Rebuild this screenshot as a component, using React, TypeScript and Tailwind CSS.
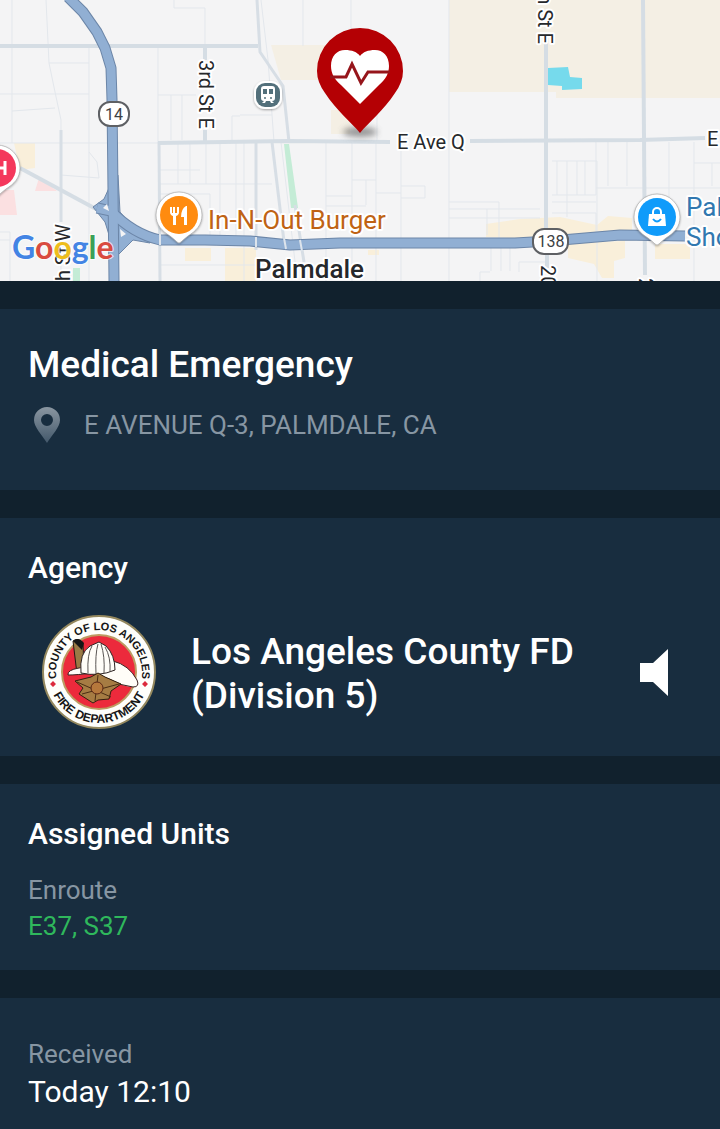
import type { ReactNode } from 'react';

const FREEWAY_14 = 'M68 -3 L83 12 L97 32 L105 48 L111 68 L112 100 L114 281';
const ROUTE_138 =
  'M97 208 L111 211 Q133 234 160 240 L205 240 L250 241 L290 245 L340 243 L450 243 L515 243 L550 241 L620 235 L685 236';

const ARTERIALS = [
  'M0 46 H258',
  'M158 143 L290 141 L390 142 M470 141 L640 140 L705 138',
  'M546 42 L546 228 M547 254 V268',
  'M643 0 L645 275',
  'M205 47 V60 M205 130 V142',
  'M20 168 L96 209',
];

const SIDE_ROADS = [
  'M159 142 L160 281',
  'M257 0 L260 52 L283 86 L289 142',
  'M272 142 L285 250 M256 142 V250',
  'M61 130 V222',
  'M295 205 L304 262',
];

const STREETS = [
  'M12 0 V143 M46 0 L49 63 L55 92 L61 120 V143 M49 63 H89 M0 94 H89 M12 111 L55 108 M89 48 V281',
  'M0 143 H158 M158 48 V142 M158 95 H196 M171 95 V140 M182 95 V140 M232 142 V116 H240 M174 0 V8 H205 V46',
  'M61 143 V175 L99 178 M89 152 L97 162 L99 178 M0 232 H10 V281 M0 240 H10 M61 265 V281',
  'M178 142 V184 M206 142 V184 M220 142 V240 M236 142 V240 M160 184 H272 M160 194 H210 V240 M244 142 V281 M160 170 H200 M190 142 V184 M160 265 H256',
  'M303 0 V46 M351 0 V30 M261 0 L268 60 L274 142 L281 142 L296 270 M240 115 H272 M377 115 V142',
  'M326 142 V281 M352 142 V281 M376 142 V281 M401 142 V281 M449 0 V281 M326 196 H352 M326 206 H366 M352 180 H376 M366 180 V205 M376 193 H401 M401 186 H425 V198 H401',
  'M449 202 H499 V240 M449 209 H540 M449 218 H540 M487 209 V235 M480 281 V272 H490 M491 240 V271 M501 240 V271 M510 240 V271 M519 272 V262 H546',
  'M552 161 H597 V281 M596 142 V195 L552 195 M557 161 V195 M567 161 V217 M577 161 V195 M585 161 V195 M552 202 H596 M552 213 H596 V240 M596 188 H720 M627 142 V186 M669 142 V235 M694 142 V281 M694 163 H720 M712 163 V186 M608 142 V186',
];

const Stroke = ({ d, color, width }: { d: string; color: string; width: number }) => (
  <path d={d} fill="none" stroke={color} strokeWidth={width} strokeLinejoin="round" />
);

type PinProps = { x: number; y: number; color: string; children: ReactNode };

const PlacePin = ({ x, y, color, children }: PinProps) => (
  <g transform={`translate(${x} ${y})`}>
    <path
      d="M0 -23 A23 23 0 0 1 23 0 C23 10 17 16 9 21 Q5 24 2 27 Q0 29 -2 27 Q-5 24 -9 21 C-17 16 -23 10 -23 0 A23 23 0 0 1 0 -23Z"
      fill="#fff"
      stroke="#8d8d8d"
      strokeOpacity="0.5"
      strokeWidth="1"
      filter="url(#pin-shadow)"
    />
    <circle r="19" fill={color} />
    {children}
  </g>
);

const IncidentMap = () => (
  <svg
    className="block h-[281px] w-full bg-[#f4f4f5] font-[Roboto,sans-serif]"
    viewBox="0 0 720 281"
    preserveAspectRatio="xMidYMid slice"
    role="img"
    aria-label="Map of Palmdale"
  >
    <defs>
      <filter id="pin-shadow" x="-30%" y="-30%" width="160%" height="160%">
        <feDropShadow dx="0" dy="1" stdDeviation="1" floodOpacity="0.35" />
      </filter>
      <filter id="ground-shadow" x="-40%" y="-80%" width="180%" height="260%">
        <feGaussianBlur stdDeviation="3" />
      </filter>
    </defs>

    <g fill="#f4efe4">
      <path d="M449 0 H720 V98 H556 V92 H449Z" />
      <path d="M271 45 H340 V80 H281Z" />
      <path d="M331 110 H350 V134 H331Z" />
    </g>
    <g fill="#f9efda">
      <path d="M14 143 H35 V168 L20 170Z" />
      <path d="M185 248 H211 V261 H185Z M225 248 H256 V281 H225Z M368 250 H379 V255 H368Z" />
      <path d="M486 224 L520 219 L560 217 L597 225 L608 216 L632 218 V234 L560 240 L486 237Z" />
      <path d="M568 243 L625 241 V258 L614 261 V278 H602 L594 264 L568 258Z M655 244 H690 V259 H655Z" />
    </g>
    <path d="M0 190 L14 190 L17 215 H0Z M39 178 L57 191 H35Z" fill="#fbe0e1" />
    <path d="M284 144 H289 L298 208 H291Z M73 268 H80 V281 H73Z" fill="#c4ecd6" />
    <path d="M548 68 L568 67 L570 77 L582 78 V89 L562 90 V86 L548 85Z" fill="#76daec" />

    {STREETS.map((d) => <Stroke key={d} d={d} color="#e3e7ec" width={1} />)}
    {SIDE_ROADS.map((d) => <Stroke key={d} d={d} color="#d7dee5" width={3} />)}
    {ARTERIALS.map((d) => <Stroke key={d} d={d} color="#d5dde4" width={4} />)}

    <path
      d="M93 207 L104 199 L109 188 L110 175 L118 175 L120 212 Q133 229 148 234 L150 243 L133 240 L119 254 L110 238 L105 222Z"
      fill="#91afd3"
      stroke="#6c86a8"
      strokeWidth="1"
    />
    <Stroke d={ROUTE_138} color="#6c86a8" width={11} />
    <Stroke d={FREEWAY_14} color="#6c86a8" width={11} />
    <Stroke d={ROUTE_138} color="#91afd3" width={9} />
    <Stroke d={FREEWAY_14} color="#91afd3" width={9} />
    <path d="M103 208 L107 204 L109 211Z M120 229 L126 234 L121 237Z" fill="#f4f4f5" />
    <path d="M160 234 V245 M256 237 V247 M284 238 L286 249 M300 240 L302 251" stroke="#dde4ec" strokeWidth="2" />

    <g fill="#fff" stroke="#5e6064" strokeWidth="2">
      <rect x="99" y="102" width="30" height="24" rx="11" />
      <rect x="533" y="229" width="35" height="25" rx="11" />
    </g>
    <g fill="#3c4043" fontSize="16" textAnchor="middle">
      <text x="114" y="120">14</text>
      <text x="551" y="247">138</text>
    </g>

    <g className="[paint-order:stroke]" stroke="#fff" strokeWidth="4" strokeLinejoin="round">
      <g fill="#26282b" fontSize="20">
        <text x="397" y="149">E Ave Q</text>
        <text x="707" y="146">E</text>
        <text transform="translate(199 60) rotate(90)">3rd St E</text>
        <text transform="translate(538 44) rotate(90)" textAnchor="end">h St E</text>
        <text transform="translate(541 265) rotate(90)">20</text>
        <text transform="translate(639 278) rotate(90)">2</text>
        <text transform="translate(70 224) rotate(-90)" textAnchor="end">h St W</text>
      </g>
      <text x="255" y="278" fill="#26282b" fontSize="26" fontWeight="500">Palmdale</text>
      <text x="208" y="229" fill="#bf6314" fontSize="26">In-N-Out Burger</text>
      <g fill="#3178b0" fontSize="26">
        <text x="686" y="216">Pal</text>
        <text x="686" y="246">Sho</text>
      </g>
    </g>
    <text
      x="12"
      y="259"
      className="font-[Lato,sans-serif] [paint-order:stroke]"
      fontSize="32"
      fontWeight="700"
      stroke="#fff"
      strokeWidth="2"
      strokeOpacity="0.7"
    >
      <tspan fill="#4384e4">G</tspan>
      <tspan fill="#d94b40">o</tspan>
      <tspan fill="#eebd1b">o</tspan>
      <tspan fill="#4384e4">g</tspan>
      <tspan fill="#3ba057">l</tspan>
      <tspan fill="#d94b40">e</tspan>
    </text>

    <PlacePin x={-3} y={168} color="#f4385c">
      <path d="M-1 -7 V7 M8 -7 V7 M-1 0 H8" fill="none" stroke="#fff" strokeWidth="3" />
    </PlacePin>
    <PlacePin x={179} y={215} color="#ff8b0f">
      <path
        d="M-9 -8 V-3 Q-9 0 -6 1 V10 H-3 V1 Q0 0 0 -3 V-8 H-2 V-2 H-4 V-8 H-6 V-2 H-7 V-8Z M7 -9 Q2 -6 2 2 H5 V10 H8 V-9Z"
        fill="#fff"
      />
    </PlacePin>
    <PlacePin x={657} y={217} color="#109bfa">
      <path d="M-4 -2 V-5 A4 4 0 0 1 4 -5 V-2" fill="none" stroke="#fff" strokeWidth="2" />
      <path d="M-8 -3 H8 L9 9 H-9Z" fill="#fff" />
      <path d="M-4 2 Q0 7 4 2" fill="none" stroke="#109bfa" strokeWidth="2" />
    </PlacePin>

    <g transform="translate(268 95)">
      <rect x="-14" y="-14" width="28" height="28" rx="11" fill="#fff" filter="url(#pin-shadow)" />
      <rect x="-12" y="-12" width="24" height="24" rx="9" fill="#53707b" />
      <path d="M-4 -9 H4 Q7 -9 7 -6 V3 Q7 6 4 6 L6 8 H3 L2 6 H-2 L-3 8 H-6 L-4 6 Q-7 6 -7 3 V-6 Q-7 -9 -4 -9Z" fill="#fff" />
      <path d="M-5 -6 H-1 V-1 H-5Z M1 -6 H5 V-1 H1Z" fill="#53707b" />
      <circle cx="-3" cy="3" r="1" fill="#53707b" />
      <circle cx="3" cy="3" r="1" fill="#53707b" />
    </g>

    <ellipse cx="360" cy="132" rx="17" ry="5" fill="#555" opacity="0.6" filter="url(#ground-shadow)" />
    <path
      d="M360 133 C352 123 336 110 325 93 Q317 82 317 71 A43 43 0 0 1 403 71 Q403 82 395 93 C384 110 368 123 360 133Z"
      fill="#b40004"
    />
    <path
      d="M360 104 L341 85 C334 79 331 73 331 66 C331 56 337 50 345 50 C352 50 357 52 360 56 C363 52 368 50 375 50 C383 50 389 56 389 66 C389 73 386 79 379 85Z"
      fill="#fff"
    />
    <path d="M330 77 H346 L352 64 L361 83 L368 72 H390" fill="none" stroke="#96151b" strokeWidth="3" />
  </svg>
);

const AgencySeal = () => (
  <svg className="size-[116px] shrink-0" viewBox="-58 -58 116 116" role="img" aria-label="County of Los Angeles Fire Department">
    <defs>
      <path id="seal-top" d="M-41 14 A43 43 0 1 1 41 14" />
      <path id="seal-bottom" d="M-51 0 A51 51 0 0 0 51 0" />
    </defs>
    <circle r="56" fill="#fefefa" stroke="#94885e" strokeWidth="2" />
    <circle r="37" fill="#ec2a3c" stroke="#bd9b62" strokeWidth="2" />
    <g fill="#161616" fontSize="11" fontWeight="700" textAnchor="middle" className="font-['Liberation_Sans',sans-serif]">
      <text>
        <textPath href="#seal-top" startOffset="50%">COUNTY OF LOS ANGELES</textPath>
      </text>
      <text fontSize="12">
        <textPath href="#seal-bottom" startOffset="50%">FIRE DEPARTMENT</textPath>
      </text>
    </g>
    <path d="M-46 9 L-43 12 L-46 15 L-49 12Z M46 9 L49 12 L46 15 L43 12Z" fill="#dc2a3c" />
    <path d="M-26 -31 Q-21 -35 -16 -29 L-15 0 L-22 2Z" fill="#9a7a45" stroke="#241a14" strokeWidth="1" />
    <path d="M-26 -31 Q-21 -36 -15 -29 L-17 -22Z" fill="#171717" />
    <path
      d="M-31 3 Q-32 -2 -20 -4 L14 -11 Q30 -7 38 8 Q41 15 34 15 Q22 14 10 7 L-6 1 Q-22 3 -31 3Z"
      fill="#fffdf8"
      stroke="#3a2020"
      strokeWidth="1"
    />
    <path d="M-18 1 Q-20 -19 -9 -26 L0 -30 L7 -26 Q16 -17 16 -2 Q0 5 -18 1Z" fill="#fffdf8" stroke="#2c2222" strokeWidth="1" />
    <path d="M-11 1 Q-12 -18 -7 -26 M-3 2 Q-4 -18 -1 -28 M5 1 Q6 -16 2 -28 M11 0 Q12 -15 6 -25" fill="none" stroke="#5a5654" strokeWidth="1" />
    <path d="M-24 9 L-8 5 L-1 1 L6 5 L22 12 L12 19 L10 27 L-1 28 L-6 31 L-20 22 L-16 16Z" fill="#a67c43" stroke="#33200f" strokeWidth="1" />
    <path d="M-22 10 L12 25 M20 12 L-17 22 M-1 3 L-4 29" stroke="#4a2d14" strokeWidth="1" />
    <circle cx="-2" cy="16" r="6" fill="#b5783c" stroke="#5a2716" strokeWidth="1" />
  </svg>
);

const LocationIcon = () => (
  <svg className="h-9 w-[26px] shrink-0" viewBox="0 0 26 36" aria-hidden="true">
    <defs>
      <linearGradient id="location-fill" x1="0" y1="0" x2="0" y2="1">
        <stop offset="0" stopColor="#8a96a1" />
        <stop offset="1" stopColor="#43586b" />
      </linearGradient>
    </defs>
    <path
      fillRule="evenodd"
      d="M13 0 A13 13 0 0 1 26 13 C26 20 18 28 13 36 C8 28 0 20 0 13 A13 13 0 0 1 13 0Z M13 7 A6 6 0 1 0 13 19 A6 6 0 1 0 13 7Z"
      fill="url(#location-fill)"
    />
  </svg>
);

export default function App() {
  return (
    <main className="flex min-h-screen flex-col bg-[#11212d] font-[Roboto,sans-serif] text-white">
      <IncidentMap />
      <div className="flex grow flex-col gap-7 pt-7">
        <section className="bg-[#182d3f] px-7 pt-8 pb-[45px]">
          <h1 className="text-[37px] leading-[48px] font-medium">Medical Emergency</h1>
          <div className="mt-4 flex items-center gap-6 pl-[6px]">
            <LocationIcon />
            <p className="text-[26px] leading-10 text-[#8796a3]">E AVENUE Q-3, PALMDALE, CA</p>
          </div>
        </section>

        <section className="bg-[#182d3f] px-7 pt-8 pb-[26px]">
          <h2 className="text-[30px] leading-9 font-medium">Agency</h2>
          <div className="mt-7 flex items-center pr-6 pl-[13px]">
            <AgencySeal />
            <h3 className="ml-[34px] flex-1 pt-1 text-[37px] leading-11 font-medium">
              Los Angeles County FD
              <br />
              (Division 5)
            </h3>
            <button type="button" aria-label="Play agency audio">
              <svg className="h-[47px] w-7" viewBox="0 0 28 47" aria-hidden="true">
                <path d="M0 14 H13 L28 0 V47 L13 33 H0Z" fill="#fff" />
              </svg>
            </button>
          </div>
        </section>

        <section className="bg-[#182d3f] px-7 pt-8 pb-[26px]">
          <h2 className="text-[30px] leading-9 font-medium">Assigned Units</h2>
          <p className="mt-5 text-[26px] leading-9 text-[#8796a3]">Enroute</p>
          <p className="text-[26px] leading-9 text-[#2fb85c]">E37, S37</p>
        </section>

        <section className="grow bg-[#182d3f] px-7 pt-9 pb-4">
          <p className="text-[26px] leading-10 text-[#8796a3]">Received</p>
          <p className="text-[30px] leading-9">Today 12:10</p>
        </section>
      </div>
    </main>
  );
}
